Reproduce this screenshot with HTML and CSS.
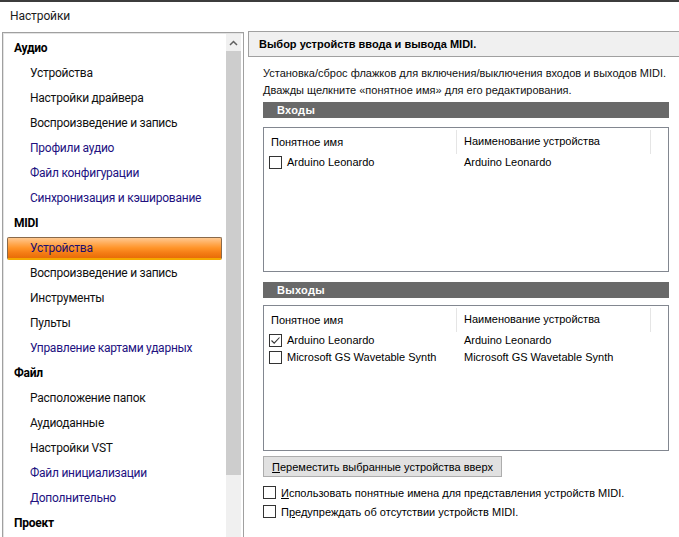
FILE: index.html
```html
<!DOCTYPE html>
<html lang="ru">
<head>
<meta charset="utf-8">
<title>Настройки</title>
<link rel="stylesheet" href="styles.css">
</head>
<body>
<div class="window">
  <div class="topstrip"></div>
  <div class="titlebar">Настройки</div>
  <div class="main">
    <div class="tree">
      <div class="tree-list">
        <div class="cat">Аудио</div>
        <div class="item">Устройства</div>
        <div class="item">Настройки драйвера</div>
        <div class="item">Воспроизведение и запись</div>
        <div class="item link">Профили аудио</div>
        <div class="item link">Файл конфигурации</div>
        <div class="item link">Синхронизация и кэширование</div>
        <div class="cat">MIDI</div>
        <div class="item selected">Устройства</div>
        <div class="item">Воспроизведение и запись</div>
        <div class="item">Инструменты</div>
        <div class="item">Пульты</div>
        <div class="item link">Управление картами ударных</div>
        <div class="cat">Файл</div>
        <div class="item">Расположение папок</div>
        <div class="item">Аудиоданные</div>
        <div class="item">Настройки VST</div>
        <div class="item link">Файл инициализации</div>
        <div class="item link">Дополнительно</div>
        <div class="cat">Проект</div>
      </div>
      <div class="scrollbar">
        <div class="sb-arrow"><svg width="9" height="6" viewBox="0 0 9 6"><path d="M1 5 L4.5 1.5 L8 5" fill="none" stroke="#606060" stroke-width="1.5"/></svg></div>
        <div class="sb-thumb"></div>
      </div>
    </div>
    <div class="panel">
      <div class="panel-head">Выбор устройств ввода и вывода MIDI.</div>
      <div class="panel-body">
        <div class="desc">Установка/сброс флажков для включения/выключения входов и выходов MIDI.</div>
        <div class="desc">Дважды щелкните «понятное имя» для его редактирования.</div>
        <div class="section">Входы</div>
        <div class="listbox lb-in">
          <div class="lv-head">
            <div class="col1">Понятное имя</div>
            <div class="col2">Наименование устройства</div>
            <div class="col3"></div>
          </div>
          <div class="lv-row">
            <div class="col1"><span class="cb"></span>Arduino Leonardo</div>
            <div class="col2">Arduino Leonardo</div>
          </div>
        </div>
        <div class="section">Выходы</div>
        <div class="listbox lb-out">
          <div class="lv-head">
            <div class="col1">Понятное имя</div>
            <div class="col2">Наименование устройства</div>
            <div class="col3"></div>
          </div>
          <div class="lv-row">
            <div class="col1"><span class="cb checked"><svg width="11" height="11" viewBox="0 0 11 11"><path d="M1.5 5.5 L4.2 8.2 L9.5 2.5" fill="none" stroke="#333" stroke-width="1.1"/></svg></span>Arduino Leonardo</div>
            <div class="col2">Arduino Leonardo</div>
          </div>
          <div class="lv-row">
            <div class="col1"><span class="cb"></span>Microsoft GS Wavetable Synth</div>
            <div class="col2">Microsoft GS Wavetable Synth</div>
          </div>
        </div>
        <div class="btn-row"><button class="btn"><u>П</u>ереместить выбранные устройства вверх</button></div>
        <div class="opt"><span class="cb"></span><span><u>И</u>спользовать понятные имена для представления устройств MIDI.</span></div>
        <div class="opt"><span class="cb"></span><span>П<u>р</u>едупреждать об отсутствии устройств MIDI.</span></div>
      </div>
    </div>
  </div>
</div>
</body>
</html>
```

FILE: styles.css
```css
* { box-sizing: border-box; }
html, body { margin: 0; padding: 0; }
body {
  width: 679px;
  height: 537px;
  overflow: hidden;
  background: #ffffff;
  font-family: "Liberation Sans", Arial, sans-serif;
  color: #000;
}
.window {
  width: 679px;
  height: 537px;
  display: flex;
  flex-direction: column;
  background: #fff;
}
.topstrip {
  height: 2px;
  background: #3c3c3c;
}
.titlebar {
  height: 30px;
  padding-left: 10px;
  padding-top: 7px;
  font-family: Roboto, "Noto Sans", sans-serif;
  font-size: 12px;
  letter-spacing: -0.1px;
  color: #1b1b1b;
}
.main {
  flex: 1;
  display: flex;
  gap: 4px;
  min-height: 0;
}
.tree {
  margin-left: 2px;
  width: 242px;
  border: 1px solid #a0a0a0;
  border-bottom: none;
  display: flex;
  padding: 1px 2px 0 1px;
  box-shadow: inset 1px 1px 0 #e3e3e3;
}
.tree-list {
  flex: 1;
  padding-top: 2px;
  padding-left: 3px;
  font-family: Roboto, "Noto Sans", sans-serif;
  font-size: 12px;
  letter-spacing: -0.25px;
  overflow: hidden;
}
.cat, .item {
  height: 25px;
  line-height: 25px;
  white-space: nowrap;
}
.cat {
  font-weight: bold;
  padding-left: 7px;
  color: #000;
}
.item {
  padding-left: 23px;
  color: #101010;
}
.item.link { color: #22117f; }
.item.selected {
  margin: 1px 4px 1px 0;
  height: 23px;
  line-height: 21px;
  border: 1px solid #8a6a4a;
  border-bottom: 2px solid #f5a800;
  border-radius: 2px;
  background: linear-gradient(to bottom, #ffc890 0%, #ffa850 30%, #ff9428 50%, #f47c14 75%, #e86c08 100%);
  color: #1c1070;
  padding-left: 22px;
}
.scrollbar {
  width: 15px;
  background: #f0f0f0;
  display: flex;
  flex-direction: column;
}
.sb-arrow {
  height: 17px;
  display: flex;
  align-items: center;
  justify-content: center;
}
.sb-thumb {
  height: 424px;
  background: #cdcdcd;
}
.panel {
  flex: 1;
  display: flex;
  flex-direction: column;
}
.panel-head {
  height: 26px;
  margin-top: -1px;
  background: #f0f0f0;
  border: 1px solid #a0a0a0;
  border-right: none;
  padding-left: 10px;
  line-height: 25px;
  font-size: 11px;
  font-weight: bold;
}
.panel-body {
  padding: 8px 10px 0 15px;
  font-size: 11px;
}
.desc {
  height: 17px;
  line-height: 17px;
  color: #111;
}
.section {
  margin-top: 3px;
  height: 16px;
  line-height: 16px;
  background: #696969;
  color: #fff;
  font-weight: bold;
  padding-left: 14px;
  letter-spacing: 0.3px;
}
.listbox {
  margin-top: 9px;
  border: 1px solid #828790;
  background: #fff;
}
.lb-in { height: 145px; margin-bottom: 10px; }
.lb-out { height: 146px; margin-top: 7px; }
.lv-head {
  display: flex;
  height: 24px;
  margin-top: 2px;
  line-height: 22px;
}
.lv-head .col1 { padding-left: 7px; }
.lv-head .col2 {
  border-left: 1px solid #e5e5e5;
  padding-left: 7px;
}
.lv-head .col3 {
  border-left: 1px solid #e5e5e5;
  flex: 1;
}
.col1 { width: 192px; display: flex; align-items: center; }
.col2 { width: 194px; }
.lv-row {
  display: flex;
  height: 17px;
  line-height: 17px;
}
.lv-row .col1 { padding-left: 5px; }
.lv-row .col2 { padding-left: 8px; }
.cb {
  width: 13px;
  height: 13px;
  border: 1px solid #333;
  background: #fff;
  margin-right: 5px;
  display: inline-flex;
  align-items: center;
  justify-content: center;
  flex: none;
}
.btn-row { margin-top: 5px; }
.btn {
  height: 21px;
  width: 239px;
  background: #e1e1e1;
  border: 1px solid #adadad;
  font-family: "Liberation Sans", Arial, sans-serif;
  font-size: 11px;
  color: #000;
  padding: 0;
  margin: 0;
}
.opt {
  display: flex;
  align-items: center;
  height: 19px;
}
.btn-row + .opt { margin-top: 6px; }
.opt .cb { margin-right: 5px; }
```
